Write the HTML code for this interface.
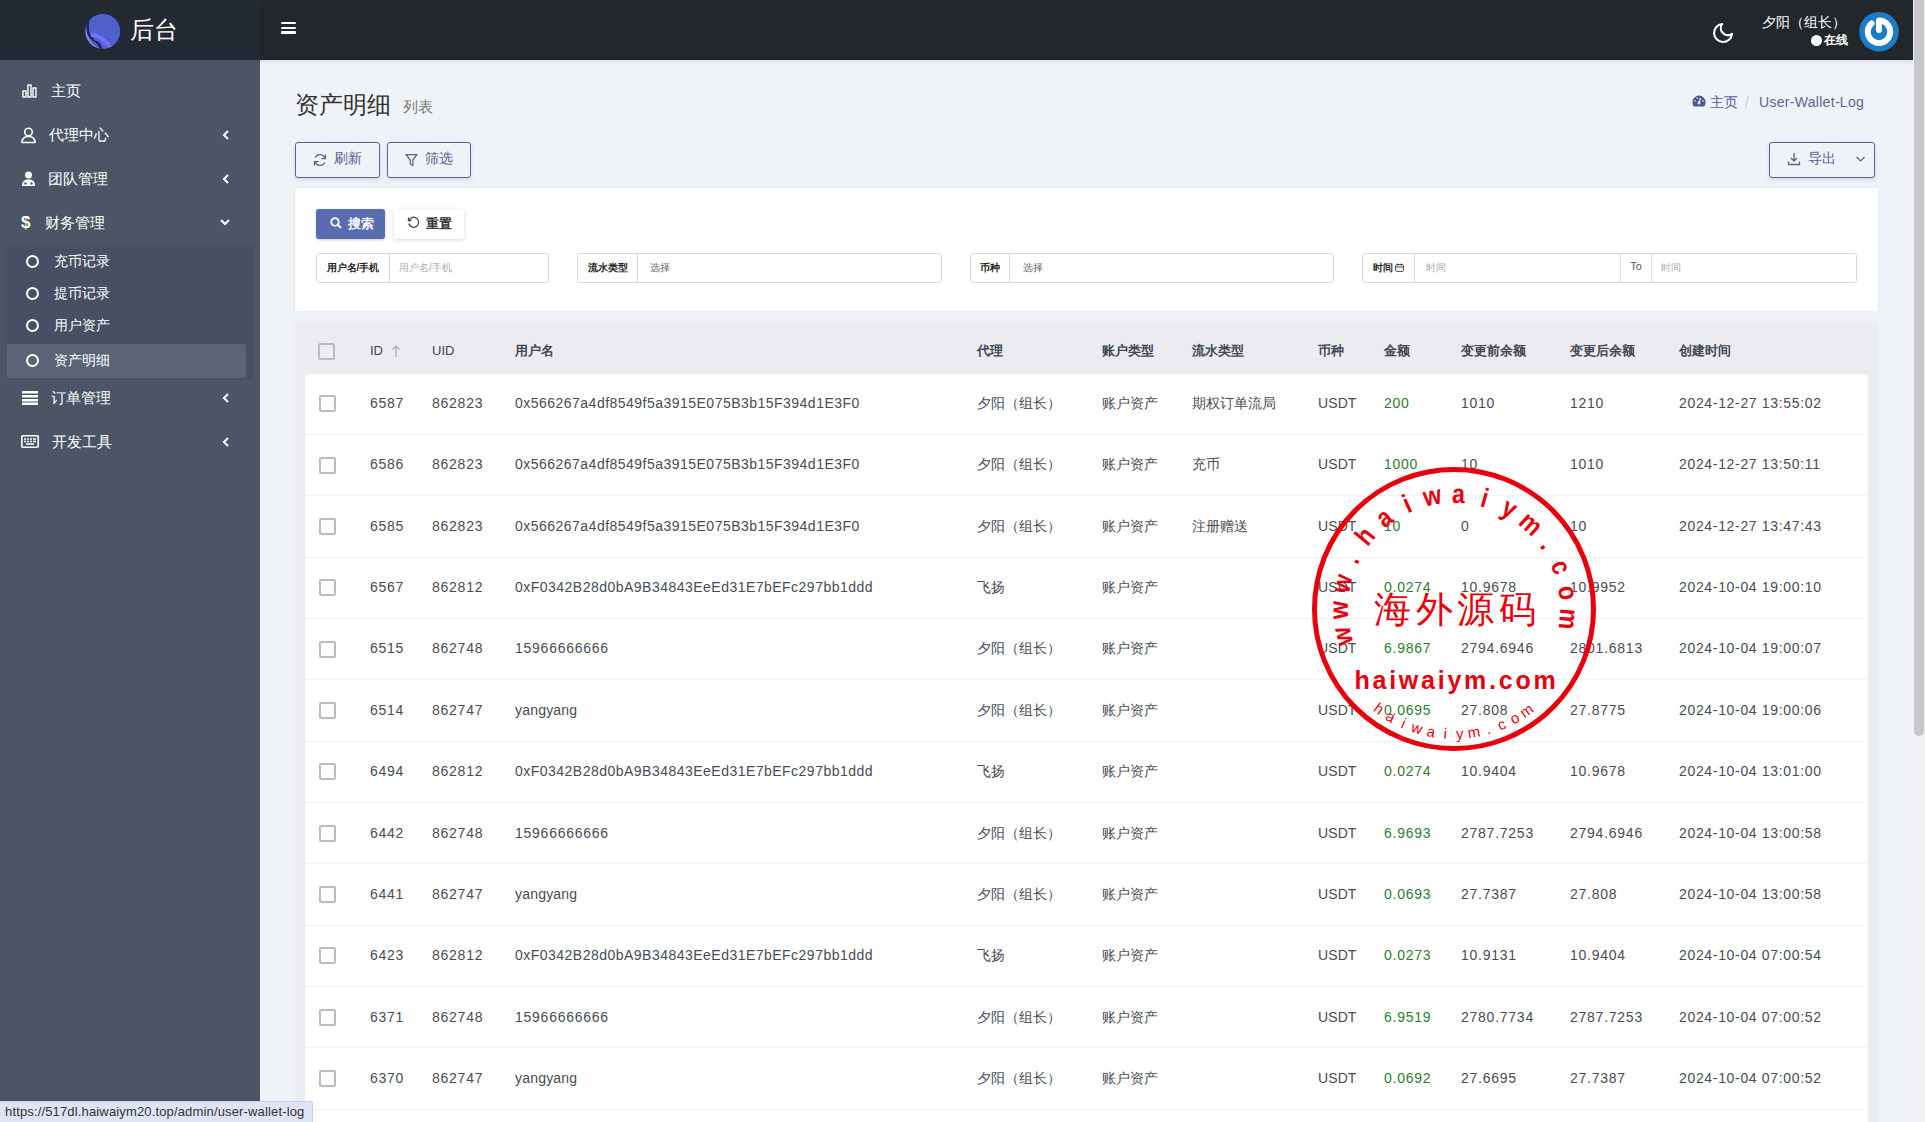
<!DOCTYPE html>
<html><head><meta charset="utf-8">
<style>
*{box-sizing:border-box;margin:0;padding:0}
html,body{width:1925px;height:1122px;overflow:hidden}
body{font-family:"Liberation Sans",sans-serif;color:#414750;background:#eff2f7;position:relative;font-size:14px}
.abs{position:absolute}
#logo{left:0;top:0;width:260px;height:60px;background:#242a34}
#side{left:0;top:60px;width:260px;height:1062px;background:#4b5566}
#nav{left:260px;top:0;width:1653px;height:60px;background:#22272b;box-shadow:0 1px 4px rgba(0,0,0,.12)}
#sb{left:1913px;top:0;width:12px;height:1122px;background:#f1f1f1}
#sbt{left:1914px;top:0;width:10px;height:736px;background:#c7c7c7;border-radius:0 0 5px 5px}
.mi{position:absolute;left:0;width:260px;height:20px;color:#fff;font-size:15px;line-height:20px}
.mi .t{position:absolute;top:0;white-space:nowrap}
.mi svg{position:absolute}
.sub{position:absolute;left:0;width:260px;height:20px;color:#fff;font-size:14px;line-height:20px}
.sub .t{position:absolute;left:54px;top:0}
.sub .o{position:absolute;left:26px;top:4px;width:13px;height:13px;border:2px solid #fff;border-radius:50%}
.btn{position:absolute;border:1px solid #5a6289;border-radius:3px;color:#586090;font-size:14px;box-shadow:0 2px 4px rgba(88,108,177,.18)}
.btn .t{position:absolute;white-space:nowrap;line-height:16px}
.card{position:absolute;background:#fff;border-radius:3px;box-shadow:0 0 4px rgba(0,0,0,.05)}
.ig{position:absolute;height:30px;border:1px solid #d9dbdf;border-radius:3px;background:#fff}
.ig .lb{position:absolute;left:0;top:0;height:28px;border-right:1px solid #d9dbdf;font-size:10px;font-weight:bold;color:#222;line-height:28px;text-align:center;white-space:nowrap}
.ig .ph{position:absolute;top:0;line-height:28px;font-size:10px;color:#aaa;white-space:nowrap}
.th{position:absolute;top:343px;font-size:13px;font-weight:bold;color:#414750;line-height:16px;white-space:nowrap}
.thl{font-weight:normal}
.row{position:absolute;left:305px;width:1563px;height:61.36px;background:#fff;border-bottom:1px solid #f0f1f4}
.cell{position:absolute;line-height:20px;font-size:14px;color:#474c55;white-space:nowrap;letter-spacing:0.6px}
.cell.cjk{letter-spacing:0}
.cell.usdt{letter-spacing:0.1px}
.cb{position:absolute;width:17px;height:17px;border:2px solid #b9bdc3;border-radius:2px;background:#fff}
.green{color:#2f7d32}
.mi svg.chev{left:221px;top:4px}

</style></head>
<body>
<div id="logo" class="abs"></div>
<div id="side" class="abs"></div>
<div id="nav" class="abs"></div>

<!-- logo -->
<svg class="abs" style="left:84px;top:12px" width="38" height="38" viewBox="0 0 38 38">
<defs><clipPath id="lc"><circle cx="18.8" cy="19.4" r="17.4"/></clipPath></defs>
<circle cx="18.8" cy="19.4" r="17.9" fill="#1a2260"/>
<circle cx="18.8" cy="19.4" r="17.4" fill="#5161cc"/>
<g clip-path="url(#lc)">
<path d="M1.5 12 C0 24 6 33 14 38" fill="none" stroke="#8a8ad6" stroke-width="3"/>
<path d="M4.5 8 C2.5 17 4 24 9 27.5 C13 30 16 32 17.5 38" fill="none" stroke="#1c2468" stroke-width="2.6"/>
<path d="M7 22.5 C14 23.5 21 26 27 37" fill="none" stroke="#7373f2" stroke-width="4"/>
<path d="M10 27 C16 28 20 31 22 38" fill="none" stroke="#6060e0" stroke-width="2"/>
</g>
</svg>
<div class="abs" style="left:130px;top:15px;font-size:24px;line-height:30px;color:#fff">后台</div>

<!-- hamburger -->
<div class="abs" style="left:281px;top:21.6px;width:15px;height:2.6px;background:#fff;border-radius:1px"></div>
<div class="abs" style="left:281px;top:26.5px;width:15px;height:2.6px;background:#fff;border-radius:1px"></div>
<div class="abs" style="left:281px;top:31.3px;width:15px;height:2.6px;background:#fff;border-radius:1px"></div>

<!-- moon -->
<svg class="abs" style="left:1711px;top:20.5px" width="24" height="24" viewBox="0 0 24 24"><path d="M21 12.79A9 9 0 1 1 11.21 3 7 7 0 0 0 21 12.79z" fill="none" stroke="#fff" stroke-width="2.1" stroke-linejoin="round"/></svg>
<div class="abs" style="left:1762px;top:13px;font-size:14px;line-height:18px;color:#fff;white-space:nowrap">夕阳（组长）</div>
<div class="abs" style="left:1811px;top:35px;width:11px;height:11px;border-radius:50%;background:#fff"></div>
<div class="abs" style="left:1824px;top:32px;font-size:12px;line-height:16px;color:#fff;font-weight:bold">在线</div>
<svg class="abs" style="left:1858px;top:11px" width="42" height="42" viewBox="0 0 42 42">
<circle cx="21" cy="20.7" r="19.8" fill="#1a7bc6"/>
<path d="M13.6 12.4 A11.2 11.2 0 1 0 21 9.6 L21 19" fill="none" stroke="#fff" stroke-width="6" stroke-linecap="round" stroke-linejoin="round"/>
</svg>

<!-- sidebar menu -->
<div class="mi" style="top:81px"><svg style="left:22px;top:3px" width="16" height="14" viewBox="0 0 16 14"><rect x="1" y="7" width="3" height="6" fill="none" stroke="#fff" stroke-width="1.4"/><rect x="6" y="1" width="3" height="12" fill="none" stroke="#fff" stroke-width="1.4"/><rect x="11" y="4" width="3" height="9" fill="none" stroke="#fff" stroke-width="1.4"/></svg><span class="t" style="left:51px">主页</span></div>
<div class="mi" style="top:125px"><svg style="left:21px;top:2px" width="15" height="17" viewBox="0 0 15 17"><circle cx="7.5" cy="5" r="3.8" fill="none" stroke="#fff" stroke-width="1.6"/><path d="M1 15.5 C1 11 4 9.5 7.5 9.5 C11 9.5 14 11 14 15.5 Z" fill="none" stroke="#fff" stroke-width="1.6" stroke-linejoin="round"/></svg><span class="t" style="left:49px">代理中心</span><svg class="chev" width="10" height="12" viewBox="0 0 10 12"><path d="M7 2 L3 6 L7 10" fill="none" stroke="#fff" stroke-width="2"/></svg></div>
<div class="mi" style="top:169px"><svg style="left:21px;top:2px" width="15" height="16" viewBox="0 0 15 16"><circle cx="7.5" cy="4" r="3.5" fill="#fff"/><path d="M1 15 C1 10 3.5 8.5 7.5 8.5 C11.5 8.5 14 10 14 15 Z" fill="#fff"/><circle cx="4.5" cy="12.5" r="1.2" fill="#4b5566"/><circle cx="10.5" cy="12.5" r="1.2" fill="#4b5566"/></svg><span class="t" style="left:48px">团队管理</span><svg class="chev" width="10" height="12" viewBox="0 0 10 12"><path d="M7 2 L3 6 L7 10" fill="none" stroke="#fff" stroke-width="2"/></svg></div>
<div class="mi" style="top:213px"><span class="t" style="left:21px;font-weight:bold;font-size:17px">$</span><span class="t" style="left:45px">财务管理</span><svg class="chev" style="left:219px" width="12" height="10" viewBox="0 0 12 10"><path d="M2 3 L6 7 L10 3" fill="none" stroke="#fff" stroke-width="2"/></svg></div>

<div class="abs" style="left:7px;top:246px;width:246px;height:134px;background:#475062;border-radius:3px"></div>
<div class="abs" style="left:7px;top:344px;width:239px;height:34px;background:#5a6474;border-radius:2px"></div>
<div class="sub" style="top:251px"><span class="o"></span><span class="t">充币记录</span></div>
<div class="sub" style="top:283px"><span class="o"></span><span class="t">提币记录</span></div>
<div class="sub" style="top:315px"><span class="o"></span><span class="t">用户资产</span></div>
<div class="sub" style="top:350px"><span class="o"></span><span class="t">资产明细</span></div>

<div class="mi" style="top:388px"><svg style="left:22px;top:3px" width="16" height="14" viewBox="0 0 16 14"><rect x="0" y="0" width="16" height="2.5" fill="#fff"/><rect x="0" y="4" width="16" height="2.5" fill="#fff"/><rect x="0" y="8" width="16" height="2.5" fill="#fff"/><rect x="0" y="11.5" width="16" height="2.5" fill="#fff"/></svg><span class="t" style="left:51px">订单管理</span><svg class="chev" width="10" height="12" viewBox="0 0 10 12"><path d="M7 2 L3 6 L7 10" fill="none" stroke="#fff" stroke-width="2"/></svg></div>
<div class="mi" style="top:432px"><svg style="left:21px;top:3px" width="18" height="13" viewBox="0 0 18 13"><rect x="0.8" y="0.8" width="16.4" height="11.4" rx="1" fill="none" stroke="#fff" stroke-width="1.6"/><path d="M3 4h2M6 4h2M9 4h2M12 4h3M3 6.5h2M6 6.5h2M9 6.5h2M12 6.5h3M5 9h8" stroke="#fff" stroke-width="1.4"/></svg><span class="t" style="left:52px">开发工具</span><svg class="chev" width="10" height="12" viewBox="0 0 10 12"><path d="M7 2 L3 6 L7 10" fill="none" stroke="#fff" stroke-width="2"/></svg></div>

<!-- content header -->
<div class="abs" style="left:295px;top:90px;font-size:24px;line-height:30px;color:#333;white-space:nowrap">资产明细</div>
<div class="abs" style="left:403px;top:97.5px;font-size:15px;line-height:18px;color:#777;white-space:nowrap">列表</div>
<svg class="abs" style="left:1692px;top:95px" width="14" height="12" viewBox="0 0 14 12"><path d="M7 0.5 A6.5 6.5 0 0 0 0.5 7 C0.5 9 1 10.5 2 11.5 H12 C13 10.5 13.5 9 13.5 7 A6.5 6.5 0 0 0 7 0.5Z" fill="#4d5891"/><circle cx="7" cy="8" r="1.4" fill="#eff2f7"/><path d="M7 8 L8.5 3" stroke="#eff2f7" stroke-width="1.2"/><circle cx="3" cy="6" r=".8" fill="#eff2f7"/><circle cx="11" cy="6" r=".8" fill="#eff2f7"/><circle cx="5" cy="3" r=".8" fill="#eff2f7"/></svg>
<div class="abs" style="left:1710px;top:93px;font-size:14px;line-height:18px;color:#566194;white-space:nowrap">主页</div>
<div class="abs" style="left:1745px;top:93px;font-size:14px;line-height:18px;color:#ccc">/</div>
<div class="abs" style="left:1759px;top:93px;font-size:14px;line-height:18px;color:#5d6690;white-space:nowrap;letter-spacing:0.3px">User-Wallet-Log</div>

<!-- toolbar buttons -->
<div class="btn" style="left:295px;top:142px;width:85px;height:36px"><svg class="abs" style="left:17px;top:10px" width="14" height="14" viewBox="0 0 14 14"><path d="M12 5.5 A5.2 5.2 0 0 0 2.3 4.5 M2 8.5 A5.2 5.2 0 0 0 11.7 9.5" fill="none" stroke="#5a6289" stroke-width="1.25"/><path d="M12.5 1.5V5.5H8.5M1.5 12.5V8.5H5.5" fill="none" stroke="#5a6289" stroke-width="1.25"/></svg><span class="t" style="left:38px;top:6.5px">刷新</span></div>
<div class="btn" style="left:387px;top:142px;width:84px;height:36px"><svg class="abs" style="left:17px;top:10px" width="13" height="14" viewBox="0 0 13 14"><path d="M1 1.5H12L7.8 6.8V12.5L5.2 11V6.8Z" fill="none" stroke="#5a6289" stroke-width="1.25" stroke-linejoin="round"/></svg><span class="t" style="left:37px;top:6.5px">筛选</span></div>
<div class="btn" style="left:1769px;top:142px;width:106px;height:36px"><svg class="abs" style="left:17px;top:9px" width="14" height="14" viewBox="0 0 14 14"><path d="M7 1V9M4 6L7 9L10 6M1.5 9.5V12.5H12.5V9.5" fill="none" stroke="#5a6289" stroke-width="1.3"/></svg><span class="t" style="left:38px;top:6.5px">导出</span><svg class="abs" style="left:85px;top:12px" width="11" height="8" viewBox="0 0 11 8"><path d="M1.5 2L5.5 6L9.5 2" fill="none" stroke="#5a6289" stroke-width="1.2"/></svg></div>

<!-- filter card -->
<div class="card" style="left:295px;top:188px;width:1583px;height:123px"></div>
<div class="abs" style="left:316px;top:209px;width:69px;height:30px;background:#586cb1;border-radius:3px;box-shadow:0 1px 3px rgba(0,0,0,.2)"></div>
<svg class="abs" style="left:330px;top:217px" width="12" height="12" viewBox="0 0 12 12"><circle cx="5" cy="5" r="3.8" fill="none" stroke="#fff" stroke-width="1.8"/><path d="M7.8 7.8L11 11" stroke="#fff" stroke-width="2"/></svg>
<div class="abs" style="left:348px;top:216px;font-size:12.5px;line-height:16px;color:#fff;white-space:nowrap;font-weight:bold">搜索</div>
<div class="abs" style="left:394px;top:209px;width:70px;height:30px;background:#fff;border-radius:3px;box-shadow:0 1px 4px rgba(0,0,0,.15)"></div>
<svg class="abs" style="left:407px;top:216px" width="13" height="13" viewBox="0 0 13 13"><path d="M2.2 4 A5 5 0 1 1 1.8 7.5" fill="none" stroke="#414750" stroke-width="1.3"/><path d="M1.5 1.5V4.5H4.5" fill="none" stroke="#414750" stroke-width="1.3"/></svg>
<div class="abs" style="left:426px;top:216px;font-size:12.5px;line-height:16px;color:#333;white-space:nowrap;font-weight:bold">重置</div>

<div class="ig" style="left:316px;top:253px;width:233px"><div class="lb" style="width:73px">用户名/手机</div><div class="ph" style="left:82px">用户名/手机</div></div>
<div class="ig" style="left:577px;top:253px;width:365px"><div class="lb" style="width:60px">流水类型</div><div class="ph" style="left:72px;color:#666">选择</div></div>
<div class="ig" style="left:970px;top:253px;width:364px"><div class="lb" style="width:39px">币种</div><div class="ph" style="left:52px;color:#666">选择</div></div>
<div class="ig" style="left:1362px;top:253px;width:495px"><div class="lb" style="width:52px">时间 <svg style="position:relative;top:1px" width="9" height="9" viewBox="0 0 9 9"><rect x="0.6" y="1.6" width="7.8" height="6.8" rx="1" fill="none" stroke="#333" stroke-width="0.9"/><path d="M0.6 4H8.4M2.8 0.5V2.5M6.2 0.5V2.5" stroke="#333" stroke-width="0.9"/></svg></div><div class="ph" style="left:63px">时间</div><div class="abs" style="left:257px;top:0;width:32px;height:28px;border-left:1px solid #dcdfe6;border-right:1px solid #dcdfe6;font-size:11px;line-height:24px;text-align:center;color:#555">To</div><div class="ph" style="left:298px">时间</div></div>

<!-- table card -->
<div class="abs" style="left:295px;top:323.5px;width:1583px;height:800px;background:#ebebf0;border-radius:3px;box-shadow:0 -2px 4px rgba(0,0,0,.03)"></div>
<div class="th thl" style="left:370px">ID</div>
<div class="th thl" style="left:432px">UID</div>
<div class="th" style="left:515px">用户名</div>
<div class="th" style="left:977px">代理</div>
<div class="th" style="left:1102px">账户类型</div>
<div class="th" style="left:1192px">流水类型</div>
<div class="th" style="left:1318px">币种</div>
<div class="th" style="left:1384px">金额</div>
<div class="th" style="left:1461px">变更前余额</div>
<div class="th" style="left:1570px">变更后余额</div>
<div class="th" style="left:1679px">创建时间</div>
<div class="cb" style="left:318px;top:343px;background:transparent"></div>
<svg class="abs" style="left:391px;top:344px" width="10" height="14" viewBox="0 0 10 14"><path d="M5 13V2M1.5 5.5L5 2l3.5 3.5" fill="none" stroke="#aab0bb" stroke-width="1.3"/></svg>
<div class="row" style="top:373.50px;border-radius:4px 4px 0 0"></div>
<div class="cb" style="left:319px;top:395.20px"></div>
<div class="cell" style="left:370px;top:393.00px;letter-spacing:0.75px;">6587</div>
<div class="cell" style="left:432px;top:393.00px;letter-spacing:0.75px;">862823</div>
<div class="cell" style="left:515px;top:393.00px;letter-spacing:0.48px;">0x566267a4df8549f5a3915E075B3b15F394d1E3F0</div>
<div class="cell cjk" style="left:977px;top:393.00px;">夕阳（组长）</div>
<div class="cell cjk" style="left:1102px;top:393.00px;">账户资产</div>
<div class="cell cjk" style="left:1192px;top:393.00px;">期权订单流局</div>
<div class="cell usdt" style="left:1318px;top:393.00px;">USDT</div>
<div class="cell green" style="left:1384px;top:393.00px;letter-spacing:0.75px;">200</div>
<div class="cell" style="left:1461px;top:393.00px;letter-spacing:0.75px;">1010</div>
<div class="cell" style="left:1570px;top:393.00px;letter-spacing:0.75px;">1210</div>
<div class="cell" style="left:1679px;top:393.00px;letter-spacing:0.67px;">2024-12-27 13:55:02</div>
<div class="row" style="top:434.86px"></div>
<div class="cb" style="left:319px;top:456.56px"></div>
<div class="cell" style="left:370px;top:454.36px;letter-spacing:0.75px;">6586</div>
<div class="cell" style="left:432px;top:454.36px;letter-spacing:0.75px;">862823</div>
<div class="cell" style="left:515px;top:454.36px;letter-spacing:0.48px;">0x566267a4df8549f5a3915E075B3b15F394d1E3F0</div>
<div class="cell cjk" style="left:977px;top:454.36px;">夕阳（组长）</div>
<div class="cell cjk" style="left:1102px;top:454.36px;">账户资产</div>
<div class="cell cjk" style="left:1192px;top:454.36px;">充币</div>
<div class="cell usdt" style="left:1318px;top:454.36px;">USDT</div>
<div class="cell green" style="left:1384px;top:454.36px;letter-spacing:0.75px;">1000</div>
<div class="cell" style="left:1461px;top:454.36px;letter-spacing:0.75px;">10</div>
<div class="cell" style="left:1570px;top:454.36px;letter-spacing:0.75px;">1010</div>
<div class="cell" style="left:1679px;top:454.36px;letter-spacing:0.67px;">2024-12-27 13:50:11</div>
<div class="row" style="top:496.22px"></div>
<div class="cb" style="left:319px;top:517.92px"></div>
<div class="cell" style="left:370px;top:515.72px;letter-spacing:0.75px;">6585</div>
<div class="cell" style="left:432px;top:515.72px;letter-spacing:0.75px;">862823</div>
<div class="cell" style="left:515px;top:515.72px;letter-spacing:0.48px;">0x566267a4df8549f5a3915E075B3b15F394d1E3F0</div>
<div class="cell cjk" style="left:977px;top:515.72px;">夕阳（组长）</div>
<div class="cell cjk" style="left:1102px;top:515.72px;">账户资产</div>
<div class="cell cjk" style="left:1192px;top:515.72px;">注册赠送</div>
<div class="cell usdt" style="left:1318px;top:515.72px;">USDT</div>
<div class="cell green" style="left:1384px;top:515.72px;letter-spacing:0.75px;">10</div>
<div class="cell" style="left:1461px;top:515.72px;letter-spacing:0.75px;">0</div>
<div class="cell" style="left:1570px;top:515.72px;letter-spacing:0.75px;">10</div>
<div class="cell" style="left:1679px;top:515.72px;letter-spacing:0.67px;">2024-12-27 13:47:43</div>
<div class="row" style="top:557.58px"></div>
<div class="cb" style="left:319px;top:579.28px"></div>
<div class="cell" style="left:370px;top:577.08px;letter-spacing:0.75px;">6567</div>
<div class="cell" style="left:432px;top:577.08px;letter-spacing:0.75px;">862812</div>
<div class="cell" style="left:515px;top:577.08px;letter-spacing:0.48px;">0xF0342B28d0bA9B34843EeEd31E7bEFc297bb1ddd</div>
<div class="cell cjk" style="left:977px;top:577.08px;">飞扬</div>
<div class="cell cjk" style="left:1102px;top:577.08px;">账户资产</div>
<div class="cell usdt" style="left:1318px;top:577.08px;">USDT</div>
<div class="cell green" style="left:1384px;top:577.08px;letter-spacing:0.75px;">0.0274</div>
<div class="cell" style="left:1461px;top:577.08px;letter-spacing:0.75px;">10.9678</div>
<div class="cell" style="left:1570px;top:577.08px;letter-spacing:0.75px;">10.9952</div>
<div class="cell" style="left:1679px;top:577.08px;letter-spacing:0.67px;">2024-10-04 19:00:10</div>
<div class="row" style="top:618.94px"></div>
<div class="cb" style="left:319px;top:640.64px"></div>
<div class="cell" style="left:370px;top:638.44px;letter-spacing:0.75px;">6515</div>
<div class="cell" style="left:432px;top:638.44px;letter-spacing:0.75px;">862748</div>
<div class="cell" style="left:515px;top:638.44px;letter-spacing:0.75px;">15966666666</div>
<div class="cell cjk" style="left:977px;top:638.44px;">夕阳（组长）</div>
<div class="cell cjk" style="left:1102px;top:638.44px;">账户资产</div>
<div class="cell usdt" style="left:1318px;top:638.44px;">USDT</div>
<div class="cell green" style="left:1384px;top:638.44px;letter-spacing:0.75px;">6.9867</div>
<div class="cell" style="left:1461px;top:638.44px;letter-spacing:0.75px;">2794.6946</div>
<div class="cell" style="left:1570px;top:638.44px;letter-spacing:0.75px;">2801.6813</div>
<div class="cell" style="left:1679px;top:638.44px;letter-spacing:0.67px;">2024-10-04 19:00:07</div>
<div class="row" style="top:680.30px"></div>
<div class="cb" style="left:319px;top:702.00px"></div>
<div class="cell" style="left:370px;top:699.80px;letter-spacing:0.75px;">6514</div>
<div class="cell" style="left:432px;top:699.80px;letter-spacing:0.75px;">862747</div>
<div class="cell" style="left:515px;top:699.80px;letter-spacing:0.2px;">yangyang</div>
<div class="cell cjk" style="left:977px;top:699.80px;">夕阳（组长）</div>
<div class="cell cjk" style="left:1102px;top:699.80px;">账户资产</div>
<div class="cell usdt" style="left:1318px;top:699.80px;">USDT</div>
<div class="cell green" style="left:1384px;top:699.80px;letter-spacing:0.75px;">0.0695</div>
<div class="cell" style="left:1461px;top:699.80px;letter-spacing:0.75px;">27.808</div>
<div class="cell" style="left:1570px;top:699.80px;letter-spacing:0.75px;">27.8775</div>
<div class="cell" style="left:1679px;top:699.80px;letter-spacing:0.67px;">2024-10-04 19:00:06</div>
<div class="row" style="top:741.66px"></div>
<div class="cb" style="left:319px;top:763.36px"></div>
<div class="cell" style="left:370px;top:761.16px;letter-spacing:0.75px;">6494</div>
<div class="cell" style="left:432px;top:761.16px;letter-spacing:0.75px;">862812</div>
<div class="cell" style="left:515px;top:761.16px;letter-spacing:0.48px;">0xF0342B28d0bA9B34843EeEd31E7bEFc297bb1ddd</div>
<div class="cell cjk" style="left:977px;top:761.16px;">飞扬</div>
<div class="cell cjk" style="left:1102px;top:761.16px;">账户资产</div>
<div class="cell usdt" style="left:1318px;top:761.16px;">USDT</div>
<div class="cell green" style="left:1384px;top:761.16px;letter-spacing:0.75px;">0.0274</div>
<div class="cell" style="left:1461px;top:761.16px;letter-spacing:0.75px;">10.9404</div>
<div class="cell" style="left:1570px;top:761.16px;letter-spacing:0.75px;">10.9678</div>
<div class="cell" style="left:1679px;top:761.16px;letter-spacing:0.67px;">2024-10-04 13:01:00</div>
<div class="row" style="top:803.02px"></div>
<div class="cb" style="left:319px;top:824.72px"></div>
<div class="cell" style="left:370px;top:822.52px;letter-spacing:0.75px;">6442</div>
<div class="cell" style="left:432px;top:822.52px;letter-spacing:0.75px;">862748</div>
<div class="cell" style="left:515px;top:822.52px;letter-spacing:0.75px;">15966666666</div>
<div class="cell cjk" style="left:977px;top:822.52px;">夕阳（组长）</div>
<div class="cell cjk" style="left:1102px;top:822.52px;">账户资产</div>
<div class="cell usdt" style="left:1318px;top:822.52px;">USDT</div>
<div class="cell green" style="left:1384px;top:822.52px;letter-spacing:0.75px;">6.9693</div>
<div class="cell" style="left:1461px;top:822.52px;letter-spacing:0.75px;">2787.7253</div>
<div class="cell" style="left:1570px;top:822.52px;letter-spacing:0.75px;">2794.6946</div>
<div class="cell" style="left:1679px;top:822.52px;letter-spacing:0.67px;">2024-10-04 13:00:58</div>
<div class="row" style="top:864.38px"></div>
<div class="cb" style="left:319px;top:886.08px"></div>
<div class="cell" style="left:370px;top:883.88px;letter-spacing:0.75px;">6441</div>
<div class="cell" style="left:432px;top:883.88px;letter-spacing:0.75px;">862747</div>
<div class="cell" style="left:515px;top:883.88px;letter-spacing:0.2px;">yangyang</div>
<div class="cell cjk" style="left:977px;top:883.88px;">夕阳（组长）</div>
<div class="cell cjk" style="left:1102px;top:883.88px;">账户资产</div>
<div class="cell usdt" style="left:1318px;top:883.88px;">USDT</div>
<div class="cell green" style="left:1384px;top:883.88px;letter-spacing:0.75px;">0.0693</div>
<div class="cell" style="left:1461px;top:883.88px;letter-spacing:0.75px;">27.7387</div>
<div class="cell" style="left:1570px;top:883.88px;letter-spacing:0.75px;">27.808</div>
<div class="cell" style="left:1679px;top:883.88px;letter-spacing:0.67px;">2024-10-04 13:00:58</div>
<div class="row" style="top:925.74px"></div>
<div class="cb" style="left:319px;top:947.44px"></div>
<div class="cell" style="left:370px;top:945.24px;letter-spacing:0.75px;">6423</div>
<div class="cell" style="left:432px;top:945.24px;letter-spacing:0.75px;">862812</div>
<div class="cell" style="left:515px;top:945.24px;letter-spacing:0.48px;">0xF0342B28d0bA9B34843EeEd31E7bEFc297bb1ddd</div>
<div class="cell cjk" style="left:977px;top:945.24px;">飞扬</div>
<div class="cell cjk" style="left:1102px;top:945.24px;">账户资产</div>
<div class="cell usdt" style="left:1318px;top:945.24px;">USDT</div>
<div class="cell green" style="left:1384px;top:945.24px;letter-spacing:0.75px;">0.0273</div>
<div class="cell" style="left:1461px;top:945.24px;letter-spacing:0.75px;">10.9131</div>
<div class="cell" style="left:1570px;top:945.24px;letter-spacing:0.75px;">10.9404</div>
<div class="cell" style="left:1679px;top:945.24px;letter-spacing:0.67px;">2024-10-04 07:00:54</div>
<div class="row" style="top:987.10px"></div>
<div class="cb" style="left:319px;top:1008.80px"></div>
<div class="cell" style="left:370px;top:1006.60px;letter-spacing:0.75px;">6371</div>
<div class="cell" style="left:432px;top:1006.60px;letter-spacing:0.75px;">862748</div>
<div class="cell" style="left:515px;top:1006.60px;letter-spacing:0.75px;">15966666666</div>
<div class="cell cjk" style="left:977px;top:1006.60px;">夕阳（组长）</div>
<div class="cell cjk" style="left:1102px;top:1006.60px;">账户资产</div>
<div class="cell usdt" style="left:1318px;top:1006.60px;">USDT</div>
<div class="cell green" style="left:1384px;top:1006.60px;letter-spacing:0.75px;">6.9519</div>
<div class="cell" style="left:1461px;top:1006.60px;letter-spacing:0.75px;">2780.7734</div>
<div class="cell" style="left:1570px;top:1006.60px;letter-spacing:0.75px;">2787.7253</div>
<div class="cell" style="left:1679px;top:1006.60px;letter-spacing:0.67px;">2024-10-04 07:00:52</div>
<div class="row" style="top:1048.46px"></div>
<div class="cb" style="left:319px;top:1070.16px"></div>
<div class="cell" style="left:370px;top:1067.96px;letter-spacing:0.75px;">6370</div>
<div class="cell" style="left:432px;top:1067.96px;letter-spacing:0.75px;">862747</div>
<div class="cell" style="left:515px;top:1067.96px;letter-spacing:0.2px;">yangyang</div>
<div class="cell cjk" style="left:977px;top:1067.96px;">夕阳（组长）</div>
<div class="cell cjk" style="left:1102px;top:1067.96px;">账户资产</div>
<div class="cell usdt" style="left:1318px;top:1067.96px;">USDT</div>
<div class="cell green" style="left:1384px;top:1067.96px;letter-spacing:0.75px;">0.0692</div>
<div class="cell" style="left:1461px;top:1067.96px;letter-spacing:0.75px;">27.6695</div>
<div class="cell" style="left:1570px;top:1067.96px;letter-spacing:0.75px;">27.7387</div>
<div class="cell" style="left:1679px;top:1067.96px;letter-spacing:0.67px;">2024-10-04 07:00:52</div>
<div class="row" style="top:1109.82px"></div>

<!-- watermark stamp -->
<svg class="abs" style="left:0;top:0" width="1925" height="1122" viewBox="0 0 1925 1122">
<circle cx="1454" cy="609" r="139.5" fill="none" stroke="#e8000b" stroke-width="5"/>
<text transform="translate(1344.2,635.8) rotate(-103.7) scale(0.86,1)" y="7" text-anchor="middle" font-family="Liberation Sans, sans-serif" font-weight="bold" font-size="27" fill="#e8000b">w</text>
<text transform="translate(1341.0,609.9) rotate(-90.4) scale(0.86,1)" y="7" text-anchor="middle" font-family="Liberation Sans, sans-serif" font-weight="bold" font-size="27" fill="#e8000b">w</text>
<text transform="translate(1343.8,584.0) rotate(-77.2) scale(0.86,1)" y="7" text-anchor="middle" font-family="Liberation Sans, sans-serif" font-weight="bold" font-size="27" fill="#e8000b">w</text>
<text transform="translate(1352.5,559.4) rotate(-63.9) scale(0.86,1)" y="7" text-anchor="middle" font-family="Liberation Sans, sans-serif" font-weight="bold" font-size="27" fill="#e8000b">.</text>
<text transform="translate(1366.6,537.4) rotate(-50.7) scale(0.86,1)" y="7" text-anchor="middle" font-family="Liberation Sans, sans-serif" font-weight="bold" font-size="27" fill="#e8000b">h</text>
<text transform="translate(1385.3,519.3) rotate(-37.4) scale(0.86,1)" y="7" text-anchor="middle" font-family="Liberation Sans, sans-serif" font-weight="bold" font-size="27" fill="#e8000b">a</text>
<text transform="translate(1407.7,505.9) rotate(-24.2) scale(0.86,1)" y="7" text-anchor="middle" font-family="Liberation Sans, sans-serif" font-weight="bold" font-size="27" fill="#e8000b">i</text>
<text transform="translate(1432.6,498.0) rotate(-10.9) scale(0.86,1)" y="7" text-anchor="middle" font-family="Liberation Sans, sans-serif" font-weight="bold" font-size="27" fill="#e8000b">w</text>
<text transform="translate(1458.6,496.1) rotate(2.3) scale(0.86,1)" y="7" text-anchor="middle" font-family="Liberation Sans, sans-serif" font-weight="bold" font-size="27" fill="#e8000b">a</text>
<text transform="translate(1484.3,500.2) rotate(15.6) scale(0.86,1)" y="7" text-anchor="middle" font-family="Liberation Sans, sans-serif" font-weight="bold" font-size="27" fill="#e8000b">i</text>
<text transform="translate(1508.5,510.0) rotate(28.8) scale(0.86,1)" y="7" text-anchor="middle" font-family="Liberation Sans, sans-serif" font-weight="bold" font-size="27" fill="#e8000b">y</text>
<text transform="translate(1529.7,525.1) rotate(42.1) scale(0.86,1)" y="7" text-anchor="middle" font-family="Liberation Sans, sans-serif" font-weight="bold" font-size="27" fill="#e8000b">m</text>
<text transform="translate(1546.9,544.7) rotate(55.3) scale(0.86,1)" y="7" text-anchor="middle" font-family="Liberation Sans, sans-serif" font-weight="bold" font-size="27" fill="#e8000b">.</text>
<text transform="translate(1559.2,567.8) rotate(68.6) scale(0.86,1)" y="7" text-anchor="middle" font-family="Liberation Sans, sans-serif" font-weight="bold" font-size="27" fill="#e8000b">c</text>
<text transform="translate(1565.9,593.0) rotate(81.8) scale(0.86,1)" y="7" text-anchor="middle" font-family="Liberation Sans, sans-serif" font-weight="bold" font-size="27" fill="#e8000b">o</text>
<text transform="translate(1566.6,619.0) rotate(95.1) scale(0.86,1)" y="7" text-anchor="middle" font-family="Liberation Sans, sans-serif" font-weight="bold" font-size="27" fill="#e8000b">m</text>
<text transform="translate(1378.2,709.6) rotate(37.0)" y="4" text-anchor="middle" font-family="Liberation Sans, sans-serif" font-size="15" fill="#e8000b">h</text>
<text transform="translate(1390.2,717.7) rotate(30.4)" y="4" text-anchor="middle" font-family="Liberation Sans, sans-serif" font-size="15" fill="#e8000b">a</text>
<text transform="translate(1403.2,724.3) rotate(23.8)" y="4" text-anchor="middle" font-family="Liberation Sans, sans-serif" font-size="15" fill="#e8000b">i</text>
<text transform="translate(1416.7,729.4) rotate(17.2)" y="4" text-anchor="middle" font-family="Liberation Sans, sans-serif" font-size="15" fill="#e8000b">w</text>
<text transform="translate(1430.8,732.8) rotate(10.6)" y="4" text-anchor="middle" font-family="Liberation Sans, sans-serif" font-size="15" fill="#e8000b">a</text>
<text transform="translate(1445.2,734.7) rotate(4.0)" y="4" text-anchor="middle" font-family="Liberation Sans, sans-serif" font-size="15" fill="#e8000b">i</text>
<text transform="translate(1459.7,734.9) rotate(-2.6)" y="4" text-anchor="middle" font-family="Liberation Sans, sans-serif" font-size="15" fill="#e8000b">y</text>
<text transform="translate(1474.1,733.4) rotate(-9.2)" y="4" text-anchor="middle" font-family="Liberation Sans, sans-serif" font-size="15" fill="#e8000b">m</text>
<text transform="translate(1488.3,730.2) rotate(-15.8)" y="4" text-anchor="middle" font-family="Liberation Sans, sans-serif" font-size="15" fill="#e8000b">.</text>
<text transform="translate(1502.0,725.5) rotate(-22.4)" y="4" text-anchor="middle" font-family="Liberation Sans, sans-serif" font-size="15" fill="#e8000b">c</text>
<text transform="translate(1515.1,719.2) rotate(-29.0)" y="4" text-anchor="middle" font-family="Liberation Sans, sans-serif" font-size="15" fill="#e8000b">o</text>
<text transform="translate(1527.3,711.5) rotate(-35.6)" y="4" text-anchor="middle" font-family="Liberation Sans, sans-serif" font-size="15" fill="#e8000b">m</text>
<text x="1457" y="622" text-anchor="middle" font-family="Liberation Serif, serif" font-size="37" fill="#e8000b" letter-spacing="4.5">海外源码</text>
<text x="1354.5" y="689" font-family="Liberation Sans, sans-serif" font-weight="bold" font-size="25" fill="#e8000b" letter-spacing="2.75">haiwaiym.com</text>
</svg>
<!-- scrollbar -->
<div id="sb" class="abs"></div>
<div id="sbt" class="abs"></div>

<!-- status bar -->
<div class="abs" style="left:0;top:1101px;width:313px;height:21px;background:#dee3f5;border:1px solid #c9d0ea;border-left:0;border-bottom:0;border-radius:0 3px 0 0"></div>
<div class="abs" style="left:5px;top:1104px;font-size:13px;line-height:15px;color:#333;white-space:nowrap;letter-spacing:0.15px">https://517dl.haiwaiym20.top/admin/user-wallet-log</div>

</body></html>
